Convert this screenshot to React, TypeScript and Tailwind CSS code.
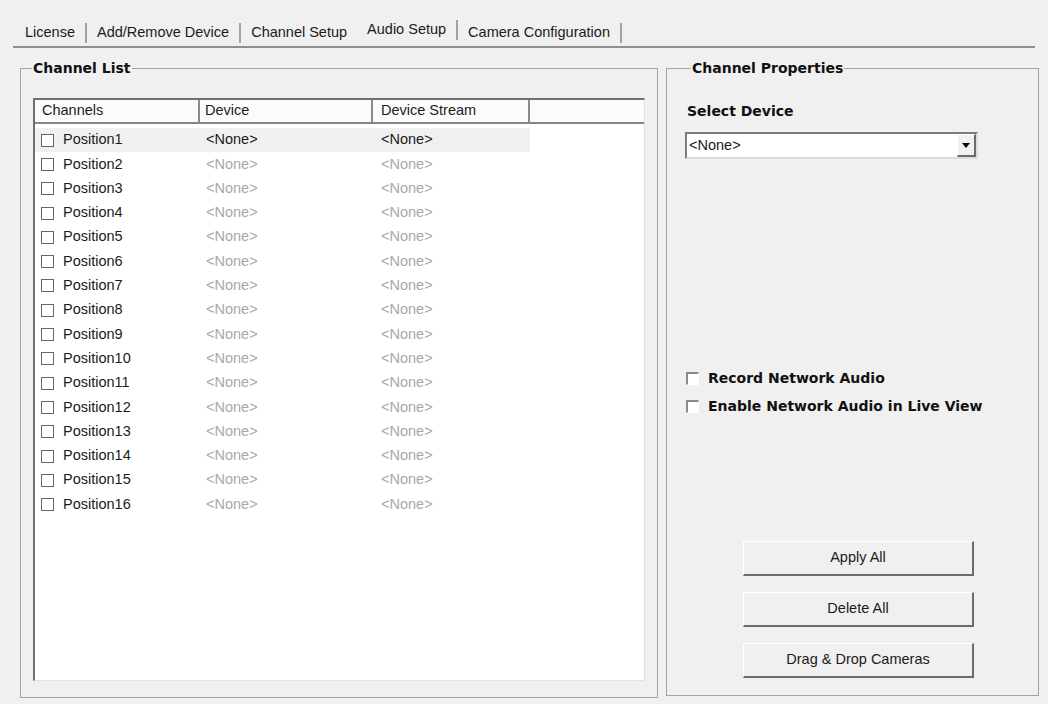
import React from 'react';

const tabs = [
  { label: 'License', sep: true, active: false },
  { label: 'Add/Remove Device', sep: true, active: false },
  { label: 'Channel Setup', sep: false, active: false },
  { label: 'Audio Setup', sep: true, active: true },
  { label: 'Camera Configuration', sep: true, active: false },
];

const channels = Array.from({ length: 16 }, (_, i) => `Position${i + 1}`);

const Tabs: React.FC = () => (
  <div className="mx-[13px] h-[48px] flex items-end pl-[2px] border-b-2 border-[#8f8f8f]">
    {tabs.map((t) => (
      <div
        key={t.label}
        className={`flex items-center h-[20px] px-[10px] text-[14.5px] ${t.sep ? 'border-r-2 border-[#a2a2a2]' : ''} ${t.active ? 'mb-[6px]' : 'mb-[3px]'}`}
      >
        {t.label}
      </div>
    ))}
  </div>
);

const ListCheckbox: React.FC = () => (
  <span className="w-[13px] h-[13px] shrink-0 bg-white border border-[#666]" />
);

const ChannelList: React.FC = () => (
  <fieldset className="w-[638px] h-[638px] border border-[#a3a3a3] p-0">
    <legend className="ml-[11px] px-[1px] font-['DejaVu_Sans',sans-serif] font-bold text-[14px] leading-[17px] text-[#111]">
      Channel List
    </legend>
    <div className="pl-[12px] pt-[21px]">
      <div className="w-[612px] h-[583px] bg-white border-l-2 border-t-2 border-[#6f6f6f] border-r border-b border-r-[#e2e2e2] border-b-[#e2e2e2] flex flex-col">
        <div className="flex h-[24px] border-b-2 border-[#868686] bg-[#fbfbfb]">
          <div className="w-[165px] h-full flex items-center pl-[7px] border-r-2 border-[#8a8a8a]">Channels</div>
          <div className="w-[173px] h-full flex items-center pl-[5px] border-r-2 border-[#8a8a8a]">Device</div>
          <div className="w-[157px] h-full flex items-center pl-[8px] border-r-2 border-[#8a8a8a]">Device Stream</div>
          <div className="flex-1" />
        </div>
        <div className="pt-[4px] flex flex-col">
          {channels.map((c, i) => (
            <div key={c} className="flex h-[24.3px]">
              <div className={`flex w-[495px] h-full items-center ${i === 0 ? 'bg-[#f0f0f0]' : ''}`}>
                <div className="w-[165px] flex items-center pl-[6px] gap-[9px] text-[#1b1b1b]">
                  <ListCheckbox />
                  <span>{c}</span>
                </div>
                <div className={`w-[173px] pl-[6px] ${i === 0 ? 'text-[#1b1b1b]' : 'text-[#a9a9a9]'}`}>&lt;None&gt;</div>
                <div className={`w-[157px] pl-[8px] ${i === 0 ? 'text-[#1b1b1b]' : 'text-[#a9a9a9]'}`}>&lt;None&gt;</div>
              </div>
            </div>
          ))}
        </div>
      </div>
    </div>
  </fieldset>
);

const FlatCheckbox: React.FC<{ label: string }> = ({ label }) => (
  <div className="flex items-center h-[17px] gap-[9px]">
    <span className="w-[13px] h-[13px] shrink-0 bg-white border-t-2 border-l-2 border-[#8a8a8a] border-r border-b border-r-white border-b-white" />
    <span className="font-['DejaVu_Sans',sans-serif] font-bold text-[14px] text-[#111]">{label}</span>
  </div>
);

const WinButton: React.FC<{ label: string }> = ({ label }) => (
  <button className="w-[231px] h-[35px] flex items-center justify-center bg-[#f0f0f0] text-[14.5px] text-[#1b1b1b] border-t border-l border-t-white border-l-white border-r-2 border-b-2 border-r-[#6b6b6b] border-b-[#6b6b6b]">
    {label}
  </button>
);

const ChannelProperties: React.FC = () => (
  <fieldset className="w-[373px] h-[636px] border border-[#a3a3a3] p-0">
    <legend className="ml-[24px] px-[1px] font-['DejaVu_Sans',sans-serif] font-bold text-[14px] leading-[17px] text-[#111]">
      Channel Properties
    </legend>
    <div className="h-[617px] flex flex-col pl-[18px] pb-[16px]">
      <div className="mt-[26px] ml-[2px] h-[17px] leading-[17px] font-['DejaVu_Sans',sans-serif] font-bold text-[14px] text-[#111]">
        Select Device
      </div>
      <div className="mt-[12px] flex w-[293px] h-[27px] bg-white border-2 border-t-[#7b7b7b] border-l-[#7b7b7b] border-r-[#dcdcdc] border-b-[#dcdcdc]">
        <div className="flex-1 flex items-center pl-[2px] text-[#1b1b1b]">&lt;None&gt;</div>
        <div className="w-[19px] h-full flex items-center justify-center bg-[#f0f0f0] border-l border-t border-l-white border-t-white border-r-2 border-b-2 border-r-[#6b6b6b] border-b-[#6b6b6b]">
          <svg width="8" height="5" viewBox="0 0 8 5">
            <path d="M0 0h8L4 5z" fill="#000" />
          </svg>
        </div>
      </div>
      <div className="mt-[211px] flex flex-col gap-[11px] pl-[1px]">
        <FlatCheckbox label="Record Network Audio" />
        <FlatCheckbox label="Enable Network Audio in Live View" />
      </div>
      <div className="mt-auto ml-[58px] flex flex-col gap-[16px]">
        <WinButton label="Apply All" />
        <WinButton label="Delete All" />
        <WinButton label="Drag & Drop Cameras" />
      </div>
    </div>
  </fieldset>
);

export default function App() {
  return (
    <div className="w-[1048px] h-[704px] overflow-hidden bg-[#f0f0f0] font-['Liberation_Sans',Arial,sans-serif] text-[14.5px] text-[#1b1b1b]">
      <Tabs />
      <div className="flex mt-[12px] ml-[20px] gap-[8px]">
        <ChannelList />
        <ChannelProperties />
      </div>
    </div>
  );
}
